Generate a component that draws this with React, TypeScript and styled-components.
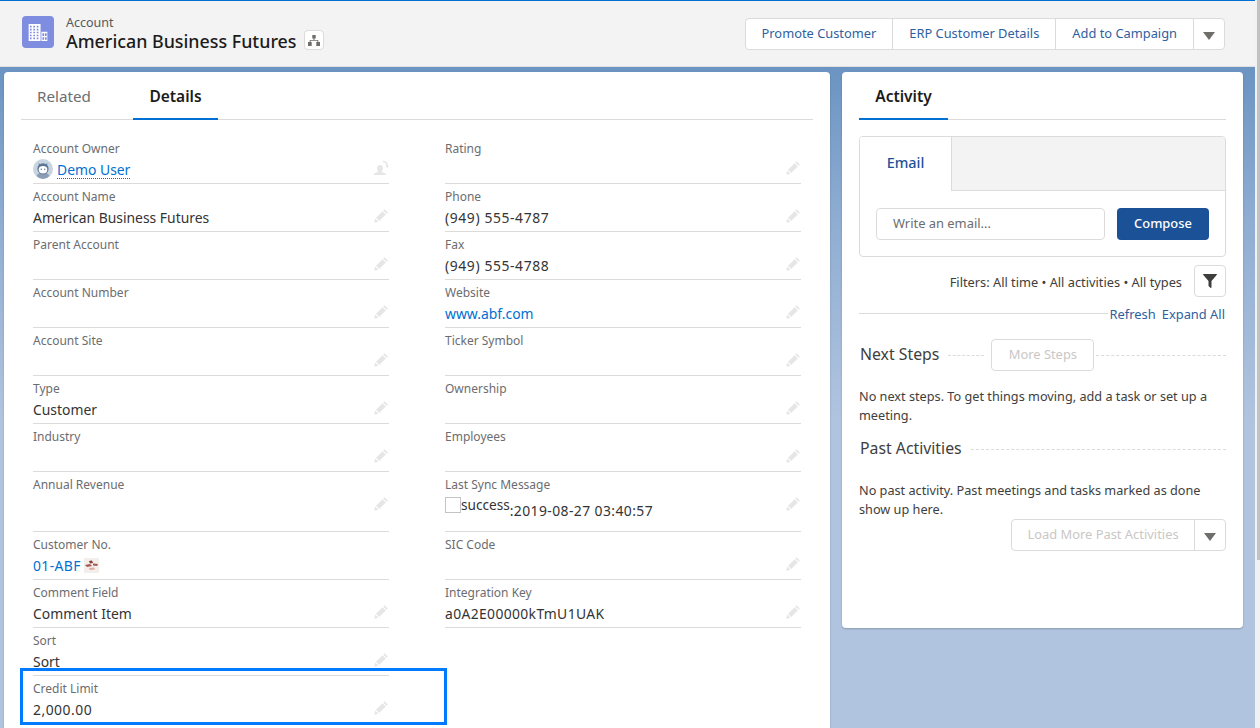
import React from "react";
import styled, { createGlobalStyle } from "styled-components";

const GlobalStyle = createGlobalStyle`
  html, body {
    margin: 0;
    padding: 0;
    height: 100%;
    overflow: hidden;
  }
  body {
    font-family: "Noto Sans", "Open Sans", sans-serif;
    color: #333;
  }
  * { box-sizing: border-box; }
`;

const Page = styled.div`
  display: flex;
  width: 1260px;
  height: 728px;
  overflow: hidden;
  background: #fff;
`;

const Main = styled.div`
  flex: 1;
  min-width: 0;
  display: flex;
  flex-direction: column;
  background: linear-gradient(180deg, #6b94c2 67px, #8fadd2 220px, #b0c4df 420px);
`;

const ScrollTrack = styled.div`
  width: 5px;
  background: #f1f1f1;
  display: flex;
  justify-content: flex-end;
`;

const ScrollThumb = styled.div`
  width: 3px;
  height: 560px;
  background: #c1c1c1;
`;

const Header = styled.header`
  flex: none;
  height: 67px;
  background: #f3f3f3;
  border-top: 1px solid #0070d2;
  border-bottom: 1px solid #e0e0e0;
  display: flex;
  align-items: flex-start;
  justify-content: space-between;
  padding: 15px 30px 0 22px;
`;

const TitleBlock = styled.div`
  display: flex;
  align-items: flex-start;
  gap: 12px;
`;

const ObjectIcon = styled.div`
  width: 32px;
  height: 32px;
  border-radius: 4px;
  background: #7f8de1;
  display: flex;
  align-items: center;
  justify-content: center;
`;

const TitleText = styled.div`
  display: flex;
  flex-direction: column;
`;

const ObjectName = styled.div`
  font-size: 12.5px;
  line-height: 14px;
  color: #56585a;
`;

const TitleRow = styled.div`
  display: flex;
  align-items: center;
  gap: 7px;
`;

const RecordName = styled.div`
  font-size: 17.85px;
  font-weight: 500;
  line-height: 20px;
  color: #1b1b1b;
  white-space: nowrap;
`;

const HierarchyButton = styled.div`
  width: 20px;
  height: 20px;
  margin-bottom: 2px;
  background: #fff;
  border: 1px solid #dddbda;
  border-radius: 4px;
  display: flex;
  align-items: center;
  justify-content: center;
`;

const ActionGroup = styled.div`
  display: flex;
  height: 32px;
  margin-top: 2px;
  background: #fff;
  border: 1px solid #dddbda;
  border-radius: 4px;
`;

const ActionButton = styled.div`
  display: flex;
  align-items: center;
  padding: 0 16px 2px;
  font-size: 12.85px;
  color: #2f5f9f;
  white-space: nowrap;
  & + & {
    border-left: 1px solid #dddbda;
  }
`;

const Caret = styled.span`
  display: block;
  width: 0;
  height: 0;
  border-left: 6.5px solid transparent;
  border-right: 6.5px solid transparent;
  border-top: 8px solid #706e6b;
`;

const CaretCell = styled.div`
  width: 31px;
  flex: none;
  display: flex;
  align-items: center;
  justify-content: center;
  padding-top: 3px;
  border-left: 1px solid #dddbda;
`;

const Columns = styled.div`
  flex: 1;
  min-height: 0;
  display: flex;
  align-items: flex-start;
  gap: 12px;
  padding: 5px 12px 0 4px;
`;

const Card = styled.section<{ $width: number; $height?: number }>`
  flex: none;
  width: ${(p) => p.$width}px;
  height: ${(p) => (p.$height ? `${p.$height}px` : "auto")};
  background: #fff;
  border-radius: 4px;
  box-shadow: 0 1px 2px rgba(0, 0, 0, 0.22);
`;

const DetailCard = styled(Card)`
  padding: 0 17px 24px;
`;

const ActivityCard = styled(Card)`
  padding: 0 17px;
`;

const TabBar = styled.div`
  display: flex;
  gap: 26px;
  height: 48px;
  border-bottom: 1px solid #dddbda;
`;

const Tab = styled.div<{ $active?: boolean; $width: number }>`
  width: ${(p) => p.$width}px;
  height: 48px;
  display: flex;
  align-items: center;
  justify-content: center;
  padding-top: ${(p) => (p.$active ? 2 : 0)}px;
  font-size: ${(p) => (p.$active ? 15.5 : 15.2)}px;
  font-weight: ${(p) => (p.$active ? 600 : 400)};
  color: ${(p) => (p.$active ? "#1b1b1b" : "#6b6d70")};
  border-bottom: ${(p) => (p.$active ? "2px solid #0070d2" : "none")};
`;

const FieldGrid = styled.div`
  display: grid;
  grid-template-columns: 356px 356px;
  column-gap: 56px;
  padding: 16px 12px 0;
`;

const Field = styled.div<{ $tall?: boolean }>`
  position: relative;
  height: ${(p) => (p.$tall ? 60 : 48)}px;
  padding-top: 4px;
  border-bottom: 1px solid #dddbda;
`;

const EmptyCell = styled.div``;

const Label = styled.div`
  font-size: 12px;
  line-height: 18px;
  color: #6b6d70;
`;

const ValueRow = styled.div`
  display: flex;
  align-items: center;
  justify-content: space-between;
  height: 22px;
`;

const Value = styled.div<{ $tracking?: number }>`
  display: flex;
  align-items: center;
  font-size: 13.9px;
  letter-spacing: ${(p) => p.$tracking || 0}px;
  color: #333;
  white-space: nowrap;
`;

const EditSlot = styled.span`
  display: flex;
  margin-bottom: 3px;
`;

const FieldLink = styled.span`
  color: #0070d2;
`;

const OwnerLink = styled(FieldLink)`
  margin: 2px 0 0 4px;
  line-height: 17px;
  border-bottom: 1px dotted #0070d2;
`;

const SyncValue = styled.div`
  display: flex;
  align-items: flex-start;
  height: 32px;
  margin-top: 13px;
`;

const BrokenImage = styled.span`
  display: block;
  width: 16px;
  height: 16px;
  margin-top: 1px;
  border: 1px solid #c4c4c4;
`;

const SyncWord = styled.span`
  font-size: 13.6px;
  line-height: 18px;
`;

const SyncStamp = styled.span`
  margin-top: 4px;
  line-height: 22px;
  letter-spacing: 0.42px;
`;

const Highlight = styled.div`
  position: absolute;
  left: -13px;
  top: -8px;
  width: 427px;
  height: 57px;
  border: 3px solid #007bff;
  pointer-events: none;
`;

const EmailBox = styled.div`
  margin-top: 16px;
  height: 121px;
  border: 1px solid #dddbda;
  border-radius: 4px;
  overflow: hidden;
`;

const EmailTabs = styled.div`
  height: 54px;
  display: flex;
  background: #f3f3f3;
`;

const EmailTab = styled.div`
  width: 92px;
  height: 54px;
  background: #fff;
  border-right: 1px solid #dddbda;
  display: flex;
  align-items: center;
  justify-content: center;
  padding-bottom: 4px;
  font-size: 14.4px;
  font-weight: 500;
  color: #1b5297;
`;

const EmailTabFill = styled.div`
  flex: 1;
  border-bottom: 1px solid #dddbda;
`;

const EmailBody = styled.div`
  display: flex;
  gap: 12px;
  padding: 17px 16px 0;
`;

const EmailInput = styled.div`
  width: 229px;
  height: 32px;
  border: 1px solid #dddbda;
  border-radius: 4px;
  padding: 0 0 2px 16px;
  display: flex;
  align-items: center;
  font-size: 12.9px;
  color: #6b6d70;
`;

const ComposeButton = styled.div`
  width: 92px;
  height: 32px;
  border-radius: 4px;
  background: #1b5297;
  color: #fff;
  font-size: 12.9px;
  font-weight: 500;
  padding-bottom: 2px;
  display: flex;
  align-items: center;
  justify-content: center;
`;

const FilterRow = styled.div`
  display: flex;
  align-items: center;
  justify-content: flex-end;
  gap: 12px;
  margin-top: 8px;
  font-size: 12.8px;
  color: #3e3e3c;
`;

const FilterText = styled.span`
  margin-top: 2px;
`;

const FilterButton = styled.div`
  width: 32px;
  height: 32px;
  border: 1px solid #dddbda;
  border-radius: 4px;
  display: flex;
  align-items: center;
  justify-content: center;
`;

const RefreshRow = styled.div`
  display: flex;
  align-items: center;
  height: 18px;
  margin-top: 8px;
  font-size: 12.9px;
  color: #2f5f9f;
`;

const SolidRule = styled.div`
  flex: 1;
  height: 1px;
  margin: 0 2px 2px 0;
  background: #dddbda;
`;

const RefreshLink = styled.span`
  margin-right: 1px;
  & + & {
    margin-left: 5px;
  }
`;

const SectionRow = styled.div<{ $top: number }>`
  display: flex;
  align-items: center;
  margin-top: ${(p) => p.$top}px;
  height: 32px;
  padding-left: 1px;
`;

const SectionTitle = styled.div`
  font-size: 15.8px;
  color: #3e3e3c;
  white-space: nowrap;
  margin-right: 9px;
  padding-bottom: 2px;
`;

const DashRule = styled.div<{ $width?: number }>`
  flex: ${(p) => (p.$width ? `none` : 1)};
  width: ${(p) => (p.$width ? `${p.$width}px` : "auto")};
  border-top: 1px dashed #dddbda;
`;

const GhostButton = styled.div`
  flex: none;
  width: 103px;
  height: 32px;
  margin: 0 2px 0 7px;
  border: 1px solid #dddbda;
  border-radius: 4px;
  padding-bottom: 2px;
  display: flex;
  align-items: center;
  justify-content: center;
  font-size: 12.9px;
  color: #c9c7c5;
`;

const Note = styled.p<{ $top: number }>`
  margin: ${(p) => p.$top}px 0 0;
  font-size: 12.7px;
  line-height: 19px;
  color: #3e3e3c;
`;

const LoadMoreRow = styled.div`
  display: flex;
  justify-content: flex-end;
`;

const LoadMoreGroup = styled.div`
  display: flex;
  width: 215px;
  height: 32px;
  border: 1px solid #dddbda;
  border-radius: 4px;
`;

const LoadMoreLabel = styled.div`
  flex: 1;
  display: flex;
  align-items: center;
  justify-content: center;
  padding-bottom: 2px;
  font-size: 12.9px;
  color: #c9c7c5;
`;

const PencilIcon = () => (
  <svg width="15" height="15" viewBox="0 0 15 15" fill="#e6e6e6">
    <path d="M10.6 1.2l3.2 3.2-1.3 1.3-3.2-3.2zM8.6 3.2l3.2 3.2-6.6 6.6-3.2-3.2zM1.2 10.6l3.2 3.2-4.2 1z" />
  </svg>
);

const OwnerChangeIcon = () => (
  <svg width="15" height="16" viewBox="0 0 15 16" fill="#e6e6e6">
    <path d="M6 5c1.8 0 3 1.5 3 3.3 0 1.2-.5 2.1-1.2 2.7-.3.3-.2.8.2 1l3 1.2c.4.2.6.5.6.9V15H0v-.9c0-.4.2-.7.6-.9l3.100-1.200c.4-.2.5-.7.2-1C3.300 10.400 3 9.500 3 8.300 3 6.500 4.200 5 6 5z" />
    <path d="M9 .8c2.900 0 5 2.200 5 5h1l-1.800 2.200L11.400 5.800h1.100C12.500 3.800 11 2.300 9 2.300z" />
  </svg>
);

const BuildingIcon = () => (
  <svg width="20" height="17" viewBox="0 0 22 20" fill="#fff">
    <path
      fillRule="evenodd"
      d="M0 0h14v20H0zM1.500 2v2h2V2zM5.500 2v2h2V2zM9.500 2v2h2V2zM1.500 5.500v2h2v-2zM5.500 5.500v2h2v-2zM9.500 5.500v2h2v-2zM1.500 9v2h2V9zM5.500 9v2h2V9zM9.500 9v2h2V9zM1.500 12.500v2h2v-2zM5.500 12.500v2h2v-2zM9.500 12.500v2h2v-2zM1.500 16v2h2v-2zM5.500 16v2h2v-2zM9.500 16v2h2v-2z"
    />
    <path
      fillRule="evenodd"
      d="M15 9h7v11h-7zM16.200 11v3h2v-3zM19.200 11v3h2v-3zM16.200 15.500v3h2v-3zM19.200 15.500v3h2v-3z"
    />
  </svg>
);

const HierarchyIcon = () => (
  <svg width="12" height="11" viewBox="0 0 12 11" fill="#706e6b">
    <path d="M4.300 0h3.400v3.400H6.500v1.500h3.800v2.200H12V11H8.300V7.100h1.100V5.800H2.600v1.300h1.100V11H0V7.100h1.700V4.900h3.800V3.400H4.300z" />
  </svg>
);

const FunnelIcon = () => (
  <svg width="14" height="14" viewBox="0 0 14 14" fill="#3e3e3c">
    <path d="M.5 0h13c.4 0 .6.400.4.700L8.500 7v6.200c0 .6-.7.900-1.100.5l-1.600-1.400c-.2-.2-.3-.4-.3-.6V7L.1.700C-.1.400.1 0 .5 0z" />
  </svg>
);

const AvatarIcon = () => (
  <svg width="20" height="20" viewBox="0 0 20 20">
    <circle cx="10" cy="10" r="10" fill="#c9d4e1" />
    <path d="M3.500 17c1-2.500 3.400-3.600 6.500-3.600s5.500 1.100 6.500 3.600A10 10 0 0 1 10 20a10 10 0 0 1-6.500-3z" fill="#8a9db5" />
    <circle cx="10" cy="9.800" r="5.600" fill="#5d7696" />
    <path d="M5.600 3.700l2 2.500-1.500 1zM14.400 3.700l-2 2.500 1.500 1z" fill="#5d7696" />
    <ellipse cx="10" cy="10.700" rx="4.300" ry="3.700" fill="#fff" />
    <circle cx="8.300" cy="10.300" r=".7" fill="#5d7696" />
    <circle cx="11.700" cy="10.300" r=".7" fill="#5d7696" />
  </svg>
);

const FlagImage = styled.svg`
  margin-left: 3px;
`;

const FlagIcon = () => (
  <FlagImage width="15" height="15" viewBox="0 0 15 15">
    <rect width="15" height="15" fill="#f1eeec" />
    <path d="M1 7l5-1 2 2-5 1z" fill="#a8584e" />
    <path d="M5 3l3-.5 1 2.500-3 .5z" fill="#8c3a30" />
    <path d="M9 5.500l5 .5-1 2-4-.5z" fill="#a8584e" />
    <path d="M5 10l5-.5 1 2-5 .5z" fill="#e0aa9f" />
  </FlagImage>
);

type FieldData = {
  label: string;
  value?: React.ReactNode;
  tall?: boolean;
  tracking?: number;
  highlight?: boolean;
};

const leftFields: FieldData[] = [
  {
    label: "Account Owner",
    value: (
      <>
        <AvatarIcon />
        <OwnerLink>Demo User</OwnerLink>
      </>
    ),
  },
  { label: "Account Name", value: "American Business Futures" },
  { label: "Parent Account" },
  { label: "Account Number" },
  { label: "Account Site" },
  { label: "Type", value: "Customer" },
  { label: "Industry" },
  { label: "Annual Revenue", tall: true },
  {
    label: "Customer No.",
    tracking: 0.4,
    value: (
      <>
        <FieldLink>01-ABF</FieldLink>
        <FlagIcon />
      </>
    ),
  },
  { label: "Comment Field", value: "Comment Item" },
  { label: "Sort", value: "Sort" },
  { label: "Credit Limit", value: "2,000.00", tracking: 0.5, highlight: true },
];

const rightFields: (FieldData | null)[] = [
  { label: "Rating" },
  { label: "Phone", value: "(949) 555-4787", tracking: 0.6 },
  { label: "Fax", value: "(949) 555-4788", tracking: 0.6 },
  { label: "Website", value: <FieldLink>www.abf.com</FieldLink> },
  { label: "Ticker Symbol" },
  { label: "Ownership" },
  { label: "Employees" },
  {
    label: "Last Sync Message",
    tall: true,
    value: (
      <SyncValue>
        <BrokenImage />
        <SyncWord>success</SyncWord>
        <SyncStamp>:2019-08-27 03:40:57</SyncStamp>
      </SyncValue>
    ),
  },
  { label: "SIC Code" },
  { label: "Integration Key", value: "a0A2E00000kTmU1UAK", tracking: 0.36 },
  null,
  null,
];

const FieldCell = ({ field }: { field: FieldData }) => {
  const isOwner = field.label === "Account Owner";
  const noEdit = field.label === "Customer No.";
  return (
    <Field $tall={field.tall}>
      <Label>{field.label}</Label>
      <ValueRow>
        <Value $tracking={field.tracking}>{field.value}</Value>
        {!noEdit && <EditSlot>{isOwner ? <OwnerChangeIcon /> : <PencilIcon />}</EditSlot>}
      </ValueRow>
      {field.highlight && <Highlight />}
    </Field>
  );
};

export default function App() {
  return (
    <Page>
      <GlobalStyle />
      <Main>
        <Header>
          <TitleBlock>
            <ObjectIcon>
              <BuildingIcon />
            </ObjectIcon>
            <TitleText>
              <ObjectName>Account</ObjectName>
              <TitleRow>
                <RecordName>American Business Futures</RecordName>
                <HierarchyButton>
                  <HierarchyIcon />
                </HierarchyButton>
              </TitleRow>
            </TitleText>
          </TitleBlock>
          <ActionGroup>
            <ActionButton>Promote Customer</ActionButton>
            <ActionButton>ERP Customer Details</ActionButton>
            <ActionButton>Add to Campaign</ActionButton>
            <CaretCell>
              <Caret />
            </CaretCell>
          </ActionGroup>
        </Header>
        <Columns>
          <DetailCard $width={826}>
            <TabBar>
              <Tab $width={86}>Related</Tab>
              <Tab $width={85} $active>
                Details
              </Tab>
            </TabBar>
            <FieldGrid>
              {leftFields.map((f, i) => {
                const r = rightFields[i];
                return (
                  <React.Fragment key={f.label}>
                    <FieldCell field={f} />
                    {r ? <FieldCell field={r} /> : <EmptyCell />}
                  </React.Fragment>
                );
              })}
            </FieldGrid>
          </DetailCard>
          <ActivityCard $width={401} $height={556}>
            <TabBar>
              <Tab $width={89} $active>
                Activity
              </Tab>
            </TabBar>
            <EmailBox>
              <EmailTabs>
                <EmailTab>Email</EmailTab>
                <EmailTabFill />
              </EmailTabs>
              <EmailBody>
                <EmailInput>Write an email...</EmailInput>
                <ComposeButton>Compose</ComposeButton>
              </EmailBody>
            </EmailBox>
            <FilterRow>
              <FilterText>Filters: All time • All activities • All types</FilterText>
              <FilterButton>
                <FunnelIcon />
              </FilterButton>
            </FilterRow>
            <RefreshRow>
              <SolidRule />
              <RefreshLink>Refresh</RefreshLink>
              <RefreshLink>Expand All</RefreshLink>
            </RefreshRow>
            <SectionRow $top={16}>
              <SectionTitle>Next Steps</SectionTitle>
              <DashRule $width={36} />
              <GhostButton>More Steps</GhostButton>
              <DashRule />
            </SectionRow>
            <Note $top={16}>
              No next steps. To get things moving, add a task or set up a meeting.
            </Note>
            <SectionRow $top={8}>
              <SectionTitle>Past Activities</SectionTitle>
              <DashRule />
            </SectionRow>
            <Note $top={16}>
              No past activity. Past meetings and tasks marked as done show up here.
            </Note>
            <LoadMoreRow>
              <LoadMoreGroup>
                <LoadMoreLabel>Load More Past Activities</LoadMoreLabel>
                <CaretCell>
                  <Caret />
                </CaretCell>
              </LoadMoreGroup>
            </LoadMoreRow>
          </ActivityCard>
        </Columns>
      </Main>
      <ScrollTrack>
        <ScrollThumb />
      </ScrollTrack>
    </Page>
  );
}
